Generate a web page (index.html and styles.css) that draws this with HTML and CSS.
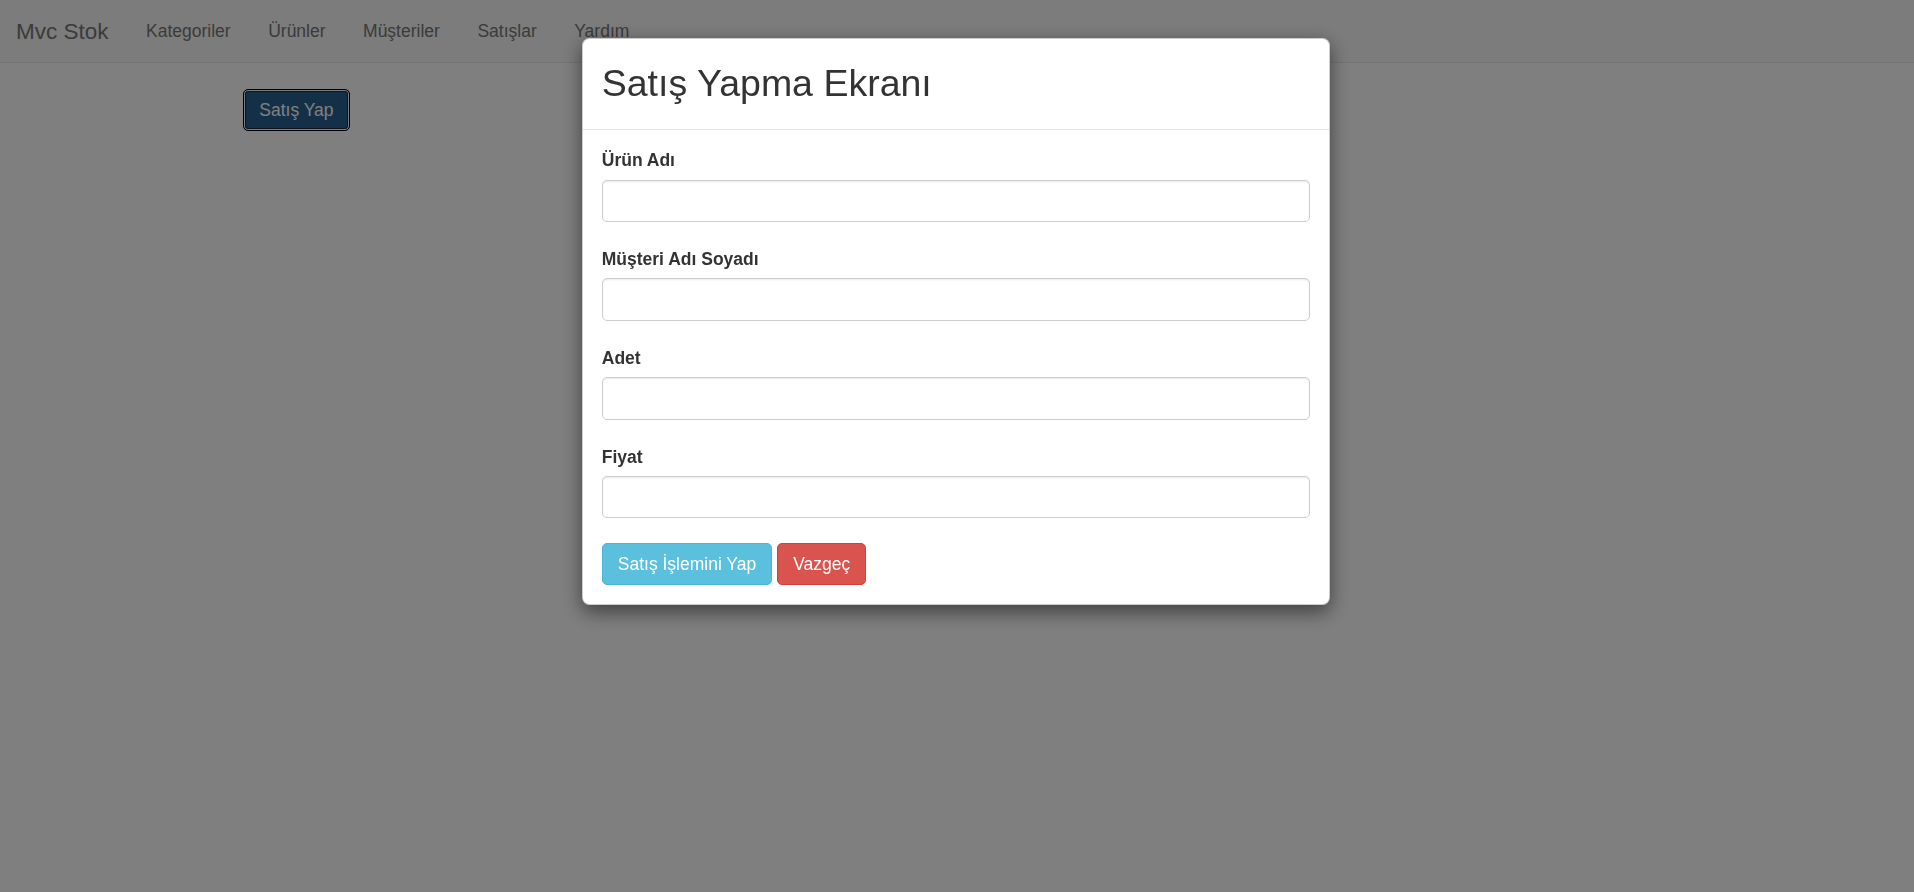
FILE: index.html
```html
<!DOCTYPE html>
<html lang="tr">
<head>
<meta charset="utf-8">
<title>Mvc Stok</title>
<link rel="stylesheet" href="styles.css">
</head>
<body>
<nav class="navbar">
  <a class="brand" href="#">Mvc Stok</a>
  <ul class="nav">
    <li><a href="#">Kategoriler</a></li>
    <li><a href="#">Ürünler</a></li>
    <li><a href="#">Müşteriler</a></li>
    <li><a href="#">Satışlar</a></li>
    <li><a href="#">Yardım</a></li>
  </ul>
</nav>
<main class="container">
  <button class="btn-open" type="button">Satış Yap</button>
</main>

<div class="backdrop"></div>

<div class="modal">
  <div class="modal-content">
    <div class="modal-header">
      <h2 class="modal-title">Satış Yapma Ekranı</h2>
    </div>
    <form class="modal-body">
      <div class="form-group">
        <label>Ürün Adı</label>
        <input class="form-control" type="text">
      </div>
      <div class="form-group">
        <label>Müşteri Adı Soyadı</label>
        <input class="form-control" type="text">
      </div>
      <div class="form-group">
        <label>Adet</label>
        <input class="form-control" type="text">
      </div>
      <div class="form-group">
        <label>Fiyat</label>
        <input class="form-control" type="text">
      </div>
      <div class="actions">
        <button class="btn btn-info" type="button">Satış İşlemini Yap</button>
        <button class="btn btn-danger" type="button">Vazgeç</button>
      </div>
    </form>
  </div>
</div>
</body>
</html>
```
FILE: styles.css
```css
* { box-sizing: border-box; }

html, body {
  margin: 0;
  padding: 0;
  height: 100%;
}

body {
  background: #fff;
  color: #333;
  font-family: "Liberation Sans", Arial, Helvetica, sans-serif;
  font-size: 17.5px;
  line-height: 25px;
}

/* navbar */
.navbar {
  display: flex;
  align-items: stretch;
  height: 62.5px;
  background: #f8f8f8;
  border-bottom: 1px solid #e7e7e7;
}

.brand {
  display: block;
  padding: 18.75px 18.75px 18.75px 16px;
  font-size: 22.5px;
  line-height: 25px;
  color: #777;
  text-decoration: none;
}

.nav {
  display: flex;
  list-style: none;
  margin: 0;
  padding: 0;
}

.nav a {
  display: block;
  padding: 18.75px;
  color: #777;
  text-decoration: none;
  line-height: 25px;
}

/* page */
.container {
  width: 1462.5px;
  margin: 26.5px auto 0;
  padding: 0 17.5px;
}

.btn-open {
  font-family: inherit;
  font-size: 17.5px;
  line-height: 25px;
  padding: 7.5px 15px;
  color: #fff;
  background: #286090;
  border: 1px solid #000;
  border-radius: 5px;
  box-shadow: inset 0 0 0 1px #fff, inset 0 0 0 2px #122c44;
  outline: none;
}

/* backdrop */
.backdrop {
  position: fixed;
  inset: 0;
  background: rgba(0, 0, 0, 0.5);
  z-index: 10;
}

/* modal */
.modal {
  position: fixed;
  inset: 0;
  z-index: 20;
  padding-top: 37.5px;
  padding-right: 2px;
}

.modal-content {
  width: 748px;
  margin: 0 auto;
  background: #fff;
  border: 1px solid rgba(0, 0, 0, 0.2);
  border-radius: 7.5px;
  box-shadow: 0 6.25px 18.75px rgba(0, 0, 0, 0.5);
}

.modal-header {
  padding: 18.75px;
  border-bottom: 1px solid #e5e5e5;
}

.modal-title {
  margin: 0;
  font-size: 37.5px;
  font-weight: 500;
  line-height: 52.5px;
  color: #333;
}

.modal-body {
  padding: 18.75px;
}

.form-group {
  margin-bottom: 25px;
}

.form-group label {
  display: block;
  font-weight: bold;
  margin-bottom: 6.25px;
}

.form-control {
  display: block;
  width: 100%;
  height: 42.5px;
  padding: 7.5px 15px;
  font-family: inherit;
  font-size: 17.5px;
  color: #555;
  background: #fff;
  border: 1px solid #ccc;
  border-radius: 5px;
  box-shadow: inset 0 1.25px 1.25px rgba(0, 0, 0, 0.075);
}

.actions {
  display: flex;
  gap: 5px;
}

.btn {
  font-family: inherit;
  font-size: 17.5px;
  line-height: 25px;
  padding: 7.5px 15px;
  color: #fff;
  border: 1px solid transparent;
  border-radius: 5px;
  cursor: pointer;
}

.btn-info {
  background: #5bc0de;
  border-color: #46b8da;
}

.btn-danger {
  background: #d9534f;
  border-color: #d43f3a;
}
```
